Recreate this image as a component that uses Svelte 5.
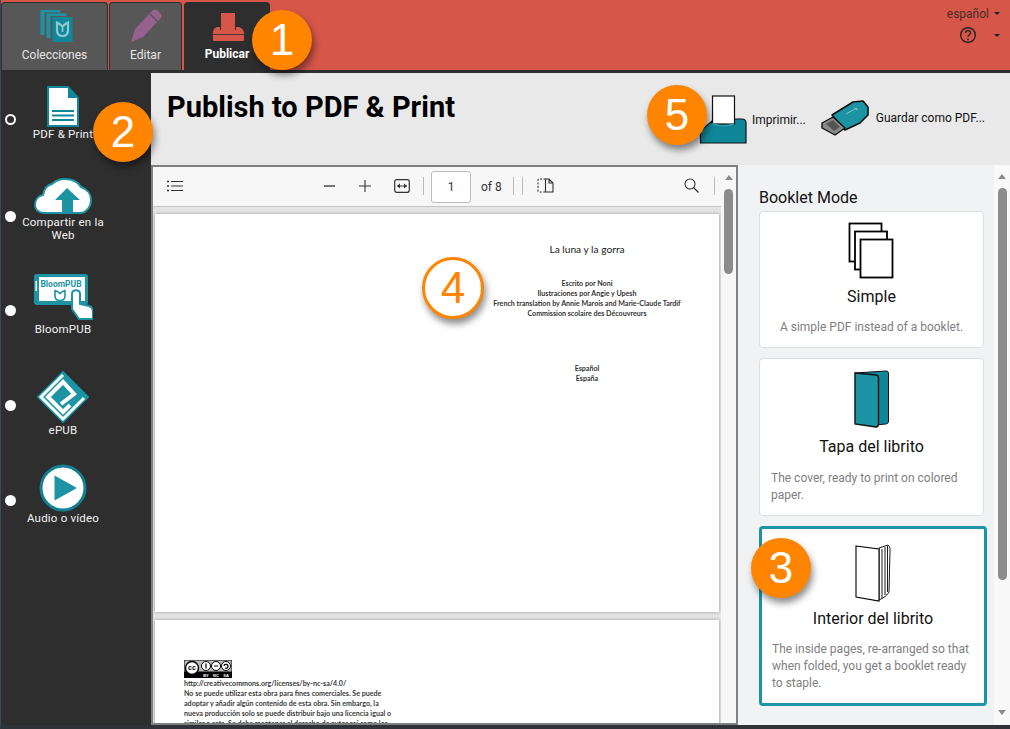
<script>
  const tabs = [
    { id: "collections", label: "Colecciones" },
    { id: "edit", label: "Editar" },
    { id: "publish", label: "Publicar", active: true },
  ];

  const navItems = [
    { id: "pdf", label: "PDF & Print", selected: true },
    { id: "web", label: "Compartir en la Web" },
    { id: "bloompub", label: "BloomPUB" },
    { id: "epub", label: "ePUB" },
    { id: "audio", label: "Audio o vídeo" },
  ];

  const titleLines = [
    "Escrito por Noni",
    "Ilustraciones por Angie y Upesh",
    "French translation by Annie Marois and Marie-Claude Tardif",
    "Commission scolaire des Découvreurs",
  ];

  const licenseLines = [
    "http://creativecommons.org/licenses/by-nc-sa/4.0/",
    "No se puede utilizar esta obra para fines comerciales. Se puede",
    "adoptar y añadir algún contenido de esta obra. Sin embargo, la",
    "nueva producción solo se puede distribuir bajo una licencia igual o",
    "similar a esta. Se debe mantener el derecho de autor así como los",
  ];
</script>

<div class="app">
  <header class="topbar">
    <div class="tabs">
      {#each tabs as tab}
        <div class="tab tab-{tab.id}" class:active={tab.active}>
          <svg class="tab-icon" width="40" height="36" viewBox="0 0 40 36">
            {#if tab.id === "collections"}
              <path d="M5.500 3h20v2.500H9.500V28h-4z" fill="#1d94a4" />
              <path d="M11.500 6.500h20V9H15.500v22h-4z" fill="#1d94a4" />
              <rect x="17.500" y="10" width="20" height="25" fill="#0f8799" />
              <path d="M22 15.500c2 .8 3.500 2 5.500 4 2-2 3.500-3.200 5.500-4v7.500c0 4-2 6-5.500 6S22 27 22 23z" fill="none" stroke="#8fc8d0" stroke-width="2.200" />
              <path d="M27.500 20v5" stroke="#8fc8d0" stroke-width="1.800" />
            {:else if tab.id === "edit"}
              <path d="M5 35l4-13L26 4c2-2 4-2 6 0l2 2c2 2 2 4 0 6L17 30z" fill="#96618c" />
              <path d="M24 7l8 8" stroke="#575757" stroke-width="1.500" />
            {:else}
              <rect x="14" y="7" width="14" height="18" fill="#d65649" />
              <path d="M6 27c0-3 1-5 4-6h3v3c3 1 13 1 16 0v-3h3c3 1 5 3 5 6v7c0 1-1 1-2 1H8c-1 0-2 0-2-1z" fill="#d65649" />
              <path d="M6 28.500h31" stroke="#2e2e2e" stroke-width="0.800" />
            {/if}
          </svg>
          <span>{tab.label}</span>
        </div>
      {/each}
    </div>
    <div class="top-right">
      <div class="lang">español <i class="caret"></i></div>
      <div class="help">
        <svg width="18" height="18" viewBox="0 0 18 18">
          <circle cx="9" cy="9" r="7.300" fill="none" stroke="#222" stroke-width="1.400" />
          <path d="M6.500 7c0-1.500 1-2.400 2.500-2.400s2.600.9 2.600 2.200c0 2-2.600 2-2.600 4" fill="none" stroke="#222" stroke-width="1.400" />
          <circle cx="9" cy="13.300" r="0.900" fill="#222" />
        </svg>
        <i class="caret"></i>
      </div>
    </div>
  </header>

  <div class="body">
    <nav class="sidebar">
      {#each navItems as item}
        <div class="nav-item nav-{item.id}">
          <span class="radio" class:selected={item.selected}></span>
          <div class="nav-button">
            {#if item.id === "pdf"}
              <svg width="32" height="41" viewBox="0 0 32 41">
                <path d="M1 1h20l10 11v28H1z" fill="#fff" stroke="#0f8799" stroke-width="2" />
                <path d="M21 1v11h10z" fill="#0f8799" />
                <path d="M5 25h22M5 29.500h22M5 34h22" stroke="#0f8799" stroke-width="2" />
              </svg>
            {:else if item.id === "web"}
              <svg width="58" height="37" viewBox="0 0 58 37">
                <path d="M10 35C4 35 1 31 1 27c0-5 3-9 8-10 1-6 4-10 9-11 3-3 8-5 13-5 7 0 13 3 16 8 6 2 10 7 10 13 0 7-5 13-11 13z" fill="#fff" stroke="#1d94a4" stroke-width="2" />
                <path d="M33 10L21 22h7v13h11V22h7z" fill="#1d94a4" />
              </svg>
            {:else if item.id === "bloompub"}
              <svg width="60" height="46" viewBox="0 0 60 46">
                <rect x="1" y="0" width="54" height="31" rx="3" fill="#1d94a4" />
                <rect x="6" y="3" width="46" height="24" fill="#fff" />
                <path d="M2.500 7h1.500v10H2.500" fill="#fff" />
                <text x="28" y="12.500" text-anchor="middle" class="bp-text">BloomPUB</text>
                <path d="M22 16.500c2 .5 3.500 1.500 5 3 1.500-1.500 3-2.500 5-3v5.500c0 3-2 4.500-5 4.500s-5-1.500-5-4.500z" fill="none" stroke="#1d94a4" stroke-width="1.600" />
                <path d="M39 20c0-5 8-5 8 0v10l9 2c3 1 4 3 4 6v7H46l-7-10z" fill="#fff" stroke="#1d94a4" stroke-width="2" />
              </svg>
            {:else if item.id === "epub"}
              <svg width="54" height="54" viewBox="0 0 54 54">
                <path d="M27 1l26 26-26 26L1 27z" fill="#1d94a4" stroke="#0f7f90" stroke-width="1" />
                <path d="M48 28L27 49 5 27 27 5" fill="none" stroke="#fff" stroke-width="3" />
                <path d="M34 35l-7 7-15-15 15-15 11 12-13 10" fill="none" stroke="#fff" stroke-width="4" />
              </svg>
            {:else}
              <svg width="48" height="48" viewBox="0 0 48 48">
                <circle cx="24" cy="24" r="22" fill="#fff" stroke="#137f90" stroke-width="3" />
                <path d="M15.500 11.500L38 24 15.500 36.500z" fill="#1d94a4" />
              </svg>
            {/if}
            <span>{item.label}</span>
          </div>
        </div>
      {/each}
    </nav>

    <main class="main">
      <div class="pub-header">
        <h1>Publish to PDF &amp; Print</h1>
        <div class="actions">
          <div class="action action-print">
            <svg width="48" height="50" viewBox="0 0 48 50">
              <path d="M1.500 48V36L13 26v2c7 2 15 2 22 0v-4h8c3 0 4 2 4 4v20z" fill="#0f8799" stroke="#111" stroke-width="1.200" />
              <rect x="13.500" y="1" width="22" height="28" fill="#fff" stroke="#111" stroke-width="1.200" />
              <path d="M13 29c7 2 15 2 22 0" fill="none" stroke="#2ba5b6" stroke-width="1.500" />
            </svg>
            <span>Imprimir...</span>
          </div>
          <div class="action action-save">
            <svg width="50" height="36" viewBox="0 0 50 36">
              <path d="M11 15L32 2l10-1 5 6v8l-8 8-15 7z" fill="#1d94a4" stroke="#111" stroke-width="1.600" stroke-linejoin="round" />
              <path d="M1 23l11-6 12 11-10 7-13-7z" fill="#8a8a8a" stroke="#111" stroke-width="1.400" stroke-linejoin="round" />
              <path d="M5 24l7-4 7 7-6 4z" fill="#555" />
              <path d="M25 14l11-6M33 8l4 2" stroke="#7cc4cf" stroke-width="1" fill="none" />
            </svg>
            <span>Guardar como PDF...</span>
          </div>
        </div>
      </div>

      <div class="content">
        <section class="viewer">
          <div class="toolbar">
            <svg class="tb-list" width="16" height="12" viewBox="0 0 16 12">
              <path d="M4 1.500h12M4 6h12M4 10.500h12" stroke="#333" stroke-width="1" />
              <path d="M0 1.500h2M0 6h2M0 10.500h2" stroke="#333" stroke-width="1.600" />
            </svg>
            <span class="tb-minus"></span>
            <svg class="tb-plus" width="12" height="12" viewBox="0 0 12 12">
              <path d="M0 6h12M6 0v12" stroke="#333" stroke-width="1.100" />
            </svg>
            <svg class="tb-fit" width="16" height="14" viewBox="0 0 16 14">
              <rect x="0.700" y="0.700" width="14.600" height="12.600" rx="2" fill="none" stroke="#333" stroke-width="1.200" />
              <path d="M3 7h10" stroke="#333" stroke-width="1" />
              <path d="M3 7l3-2.500v5zM13 7l-3-2.500v5z" fill="#333" />
            </svg>
            <i class="tb-sep sep-a"></i>
            <div class="page-input">1</div>
            <span class="page-of">of 8</span>
            <i class="tb-sep sep-b"></i>
            <i class="tb-sep sep-c"></i>
            <svg class="tb-spread" width="17" height="15" viewBox="0 0 17 15">
              <path d="M8.500 1H2a1 1 0 0 0-1 1v11a1 1 0 0 0 1 1h6.500" fill="none" stroke="#333" stroke-width="1.100" stroke-dasharray="2 1.500" />
              <path d="M8.500 1H12l4 4v9H8.500zM12 1v4h4" fill="none" stroke="#333" stroke-width="1.100" />
            </svg>
            <svg class="tb-search" width="15" height="15" viewBox="0 0 15 15">
              <circle cx="6" cy="6" r="5" fill="none" stroke="#333" stroke-width="1.100" />
              <path d="M9.500 9.500l5 5" stroke="#333" stroke-width="1.200" />
            </svg>
            <i class="tb-sep sep-d"></i>
          </div>

          <div class="viewer-body">
            <div class="pages">
              <div class="page page-one">
                <div class="book-title">La luna y la gorra</div>
                <div class="credits">
                  {#each titleLines as line}
                    <div>{line}</div>
                  {/each}
                </div>
                <div class="lang-lines">
                  <div>Español</div>
                  <div>España</div>
                </div>
              </div>
              <div class="page page-two">
                <svg class="cc-badge" width="48" height="18" viewBox="0 0 48 18">
                  <rect width="48" height="18" fill="#000" />
                  <rect x="0.500" y="0.500" width="47" height="11" fill="#bbb" />
                  <circle cx="8" cy="8" r="6.500" fill="#fff" stroke="#000" stroke-width="1.400" />
                  <text x="8" y="10" text-anchor="middle" class="cc-text">cc</text>
                  <circle cx="22" cy="6" r="4.500" fill="#fff" stroke="#000" />
                  <circle cx="32" cy="6" r="4.500" fill="#fff" stroke="#000" />
                  <circle cx="42" cy="6" r="4.500" fill="#fff" stroke="#000" />
                  <path d="M22 3.500v5M30 6h4M40 6a2 2 0 1 1 1 2" stroke="#000" stroke-width="1.200" fill="none" />
                  <text x="22" y="16.500" text-anchor="middle" class="cc-small">BY</text>
                  <text x="32" y="16.500" text-anchor="middle" class="cc-small">NC</text>
                  <text x="42" y="16.500" text-anchor="middle" class="cc-small">SA</text>
                </svg>
                {#each licenseLines as line}
                  <div class="license-line">{line}</div>
                {/each}
              </div>
            </div>
            <div class="scrollbar pdf-scroll">
              <i class="arrow-up"></i>
              <div class="thumb"></div>
            </div>
          </div>
        </section>

        <aside class="panel">
          <div class="modes">
            <h2>Booklet Mode</h2>
            <div class="card card-simple">
              <svg width="48" height="58" viewBox="0 0 48 58">
                <rect x="1.500" y="1.500" width="32" height="38" fill="#fff" stroke="#000" stroke-width="1.800" />
                <rect x="7" y="9.500" width="32" height="38" fill="#fff" stroke="#000" stroke-width="1.800" />
                <rect x="12.500" y="17.500" width="32" height="38" fill="#fff" stroke="#000" stroke-width="1.800" />
              </svg>
              <h3>Simple</h3>
              <p class="centered">A simple PDF instead of a booklet.</p>
            </div>
            <div class="card card-cover">
              <svg width="36" height="58" viewBox="0 0 36 58">
                <path d="M1 3L32 1c2 0 2.500 1 2.500 3v47c0 2-1 3-3 3l-9 1z" fill="#0f8799" stroke="#111" stroke-width="1" />
                <path d="M1 3l21 2c2 0 2.500 2 2.500 3v46c0 2-1 3-2.500 3L1 54z" fill="#1d94a4" stroke="#111" stroke-width="1.400" />
              </svg>
              <h3>Tapa del librito</h3>
              <p>The cover, ready to print on colored paper.</p>
            </div>
            <div class="card card-inside selected">
              <svg width="36" height="60" viewBox="0 0 36 60">
                <path d="M24 6l9-3c2 2 2 3 2 5l-1 42c-1 2-3 4-6 6l-4 2z" fill="#fff" stroke="#000" stroke-width="0.900" />
                <path d="M27 7v49M30 5v48M32.500 4v46" stroke="#000" stroke-width="0.900" fill="none" />
                <path d="M1 4l23 3v52L1 55z" fill="#fff" stroke="#000" stroke-width="1.100" />
              </svg>
              <h3>Interior del librito</h3>
              <p>The inside pages, re-arranged so that when folded, you get a booklet ready to staple.</p>
            </div>
          </div>
          <div class="scrollbar panel-scroll">
            <i class="arrow-up"></i>
            <div class="thumb"></div>
            <i class="arrow-down"></i>
          </div>
        </aside>
      </div>
    </main>
  </div>

  <div class="badge b1">1</div>
  <div class="badge b2">2</div>
  <div class="badge b3">3</div>
  <div class="badge outline b4">4</div>
  <div class="badge b5">5</div>
</div>

<style>
  :global(body) {
    margin: 0;
  }

  .app {
    position: relative;
    width: 1010px;
    height: 729px;
    overflow: hidden;
    display: flex;
    flex-direction: column;
    background: #2e2e2e;
    font-family: Roboto, "Liberation Sans", sans-serif;
    box-sizing: border-box;
    border-left: 1px solid #3a4a5a;
    border-bottom: 4px solid #2d3338;
  }

  .topbar {
    height: 70px;
    flex: none;
    display: flex;
    justify-content: space-between;
    background: #d65649;
  }

  .tabs {
    display: flex;
    gap: 1px;
    padding-top: 2px;
  }

  .tab {
    box-sizing: border-box;
    height: 68px;
    display: flex;
    flex-direction: column;
    align-items: center;
    justify-content: flex-end;
    padding-bottom: 8px;
    background: #575757;
    border: 1px solid #2e2e2e;
    border-bottom: 0;
    border-radius: 4px 4px 0 0;
    color: #e6e6e6;
    font-size: 12px;
  }

  .tab-collections {
    width: 107px;
  }

  .tab-edit {
    width: 73px;
  }

  .tab-publish {
    width: 86px;
    margin-left: 1px;
  }

  .tab-icon {
    margin-bottom: 5px;
  }

  .tab.active {
    background: #2e2e2e;
    color: #fff;
    font-weight: 700;
    padding-bottom: 9px;
  }

  .top-right {
    display: flex;
    flex-direction: column;
    align-items: flex-end;
    padding: 6px 10px 0 0;
    color: #4b2a26;
    font-size: 12px;
  }

  .lang {
    display: flex;
    align-items: center;
    gap: 5px;
    height: 15px;
  }

  .help {
    display: flex;
    align-items: center;
    gap: 17px;
    margin-top: 5px;
  }

  .caret {
    width: 0;
    height: 0;
    border-left: 3px solid transparent;
    border-right: 3px solid transparent;
    border-top: 3px solid #222;
  }

  .body {
    flex: 1;
    min-height: 0;
    display: flex;
  }

  .sidebar {
    width: 150px;
    flex: none;
    padding-top: 3px;
    color: #f2f2f2;
    font-size: 11.500px;
    background: #2e2e2e;
  }

  .nav-item {
    display: flex;
    align-items: center;
    box-sizing: border-box;
    padding-left: 4px;
  }

  .nav-pdf {
    height: 92px;
  }

  .nav-web {
    height: 102px;
  }

  .nav-bloompub {
    height: 86px;
  }

  .nav-epub {
    height: 104px;
  }

  .nav-audio {
    height: 86px;
  }

  .radio {
    box-sizing: border-box;
    width: 11px;
    height: 11px;
    border-radius: 50%;
    background: #fff;
    flex: none;
  }

  .radio.selected {
    background: #2e2e2e;
    border: 2.500px solid #fff;
  }

  .nav-button {
    align-self: flex-start;
    width: 94px;
    margin-left: 0;
    display: flex;
    flex-direction: column;
    align-items: center;
    text-align: center;
    line-height: 13px;
    letter-spacing: 0.2px;
  }

  .nav-pdf .nav-button {
    padding-top: 13px;
    gap: 1px;
  }

  .nav-web .nav-button {
    padding-top: 13px;
    gap: 1px;
  }

  .nav-bloompub .nav-button {
    padding-top: 7px;
    gap: 3px;
  }

  .nav-epub .nav-button {
    padding-top: 17px;
    gap: 0;
  }

  .nav-audio .nav-button {
    padding-top: 7px;
    gap: 0;
  }

  .bp-text {
    font: 700 8.500px Roboto, sans-serif;
    fill: #1d94a4;
    letter-spacing: 0;
  }

  .main {
    flex: 1;
    min-width: 0;
    display: flex;
    flex-direction: column;
    border-top: 3px solid #2e2e2e;
  }

  .pub-header {
    height: 92px;
    flex: none;
    box-sizing: border-box;
    background: #e9e9e9;
    display: flex;
    justify-content: space-between;
    padding-left: 16px;
  }

  h1 {
    margin: 16px 0 0;
    font-size: 29px;
    line-height: 36px;
    font-weight: 700;
    color: #000;
  }

  .actions {
    display: flex;
    align-items: flex-start;
    font-size: 12px;
    color: #111;
    padding-right: 25px;
  }

  .action {
    display: flex;
    align-items: center;
    gap: 5px;
  }

  .action-print {
    padding-top: 22px;
    margin-right: 15px;
  }

  .action-save {
    padding-top: 27px;
  }

  .content {
    flex: 1;
    min-height: 0;
    display: flex;
  }

  .viewer {
    box-sizing: border-box;
    width: 587px;
    flex: none;
    display: flex;
    flex-direction: column;
    border: 2px solid #808080;
    background: #e4e4e4;
  }

  .toolbar {
    height: 40px;
    flex: none;
    box-sizing: border-box;
    display: flex;
    align-items: center;
    background: #f7f7f7;
    border-bottom: 1px solid #c4c4c4;
    padding-bottom: 2px;
  }

  .tb-list {
    margin-left: 14px;
  }

  .tb-minus {
    width: 11px;
    height: 2px;
    margin-left: 141px;
    background: #777;
  }

  .tb-plus {
    margin-left: 24px;
  }

  .tb-fit {
    margin-left: 23px;
  }

  .tb-sep {
    width: 1px;
    height: 18px;
    background: #bbb;
  }

  .sep-a {
    margin-left: 13px;
  }

  .page-input {
    box-sizing: border-box;
    width: 40px;
    height: 32px;
    margin: 2px 0 0 7px;
    border: 1px solid #bdbdbd;
    border-radius: 3px;
    background: #fff;
    font-size: 12px;
    line-height: 31px;
    text-align: center;
    color: #333;
  }

  .page-of {
    margin: 3px 0 0 10px;
    font-size: 12px;
    color: #333;
  }

  .sep-b {
    margin-left: 11px;
  }

  .sep-c {
    margin-left: 8px;
  }

  .tb-spread {
    margin-left: 14px;
  }

  .tb-search {
    margin-left: 130px;
  }

  .sep-d {
    margin-left: 15px;
  }

  .viewer-body {
    flex: 1;
    min-height: 0;
    display: flex;
    background: #e4e4e4;
  }

  .pages {
    flex: 1;
    min-width: 0;
    overflow: hidden;
    display: flex;
    flex-direction: column;
    align-items: center;
    gap: 8px;
    padding-top: 7px;
  }

  .page {
    box-sizing: border-box;
    width: 564px;
    flex: none;
    background: #fff;
    box-shadow: 0 0 3px rgba(0, 0, 0, 0.35);
    font-family: Lato, "Noto Sans", sans-serif;
    color: #333;
  }

  .page-one {
    height: 398px;
    padding-left: 300px;
    text-align: center;
    font-size: 7.100px;
    line-height: 10px;
    font-weight: 700;
    white-space: nowrap;
  }

  .book-title {
    margin-top: 29px;
    font-size: 10.200px;
    font-weight: 400;
    line-height: 12px;
    color: #222;
  }

  .credits {
    margin-top: 24px;
  }

  .lang-lines {
    margin-top: 45px;
  }

  .page-two {
    height: 140px;
    padding: 40px 0 0 29px;
    font-size: 7.100px;
    line-height: 10px;
    font-weight: 700;
    color: #3a3a3a;
    white-space: nowrap;
  }

  .cc-badge {
    display: block;
    margin-bottom: 1px;
  }

  .cc-text {
    font: 700 7px "Liberation Sans", sans-serif;
    fill: #000;
  }

  .cc-small {
    font: 700 4px "Liberation Sans", sans-serif;
    fill: #fff;
  }

  .license-line {
    height: 10px;
  }

  .scrollbar {
    position: relative;
    flex: none;
    display: flex;
    flex-direction: column;
    align-items: center;
    background: #f7f7f7;
  }

  .pdf-scroll {
    width: 15px;
    margin-top: -40px;
    padding-top: 8px;
    box-sizing: border-box;
  }

  .pdf-scroll .thumb {
    height: 85px;
    margin-top: 9px;
  }

  .thumb {
    width: 9px;
    border-radius: 5px;
    background: #8c8c8c;
  }

  .arrow-up,
  .arrow-down {
    width: 0;
    height: 0;
    border-left: 4.500px solid transparent;
    border-right: 4.500px solid transparent;
  }

  .arrow-up {
    border-bottom: 5px solid #8c8c8c;
  }

  .arrow-down {
    border-top: 5px solid #8c8c8c;
    margin-top: auto;
    margin-bottom: 10px;
  }

  .panel {
    flex: 1;
    min-width: 0;
    display: flex;
    background: #f1f2f4;
  }

  .modes {
    flex: 1;
    min-width: 0;
    padding: 23px 0 0 21px;
  }

  h2 {
    margin: 0 0 4px;
    font-size: 16px;
    font-weight: 400;
    line-height: 19px;
    color: #111;
  }

  .card {
    box-sizing: border-box;
    width: 225px;
    background: #fff;
    border: 1px solid #dedfe2;
    border-radius: 4px;
    display: flex;
    flex-direction: column;
    align-items: center;
    margin-bottom: 10px;
  }

  .card-simple {
    height: 137px;
    padding-top: 10px;
  }

  .card-cover {
    height: 158px;
    padding-top: 11px;
  }

  .card-inside {
    height: 181px;
    padding-top: 13px;
  }

  .card.selected {
    width: 228px;
    height: 180px;
    border: 3px solid #1d94a4;
    margin-top: 10px;
  }

  h3 {
    margin: 7px 0 0;
    font-size: 16px;
    font-weight: 400;
    line-height: 20px;
    color: #111;
  }

  .card-cover h3 {
    margin-top: 9px;
  }

  p {
    align-self: stretch;
    margin: 13px 0 0;
    padding: 0 11px;
    font-size: 12px;
    line-height: 17px;
    color: #808080;
  }

  .centered {
    text-align: center;
    margin-top: 12px;
  }

  .card-inside p {
    padding: 0 10px;
    margin-top: 12px;
  }

  .card-inside h3 {
    margin-top: 7px;
  }

  .panel-scroll {
    width: 16px;
    padding-top: 9px;
    box-sizing: border-box;
    background: #f9f9f9;
  }

  .panel-scroll .thumb {
    height: 392px;
    margin-top: 9px;
    width: 9px;
  }

  .badge {
    position: absolute;
    width: 60px;
    height: 60px;
    border-radius: 50%;
    background: #ff8400;
    color: #fff;
    font-family: "Liberation Sans", sans-serif;
    font-size: 44px;
    line-height: 60px;
    text-align: center;
    box-shadow: 2px 5px 7px rgba(0, 0, 0, 0.45);
  }

  .badge.outline {
    box-sizing: border-box;
    width: 62px;
    height: 62px;
    background: #fff;
    border: 3px solid #ff8400;
    color: #ff8400;
    line-height: 56px;
  }

  .b1 {
    left: 251px;
    top: 10px;
  }

  .b2 {
    left: 92px;
    top: 102px;
  }

  .b3 {
    left: 750px;
    top: 538px;
  }

  .b4 {
    left: 421px;
    top: 257px;
  }

  .b5 {
    left: 646px;
    top: 85px;
  }
</style>
